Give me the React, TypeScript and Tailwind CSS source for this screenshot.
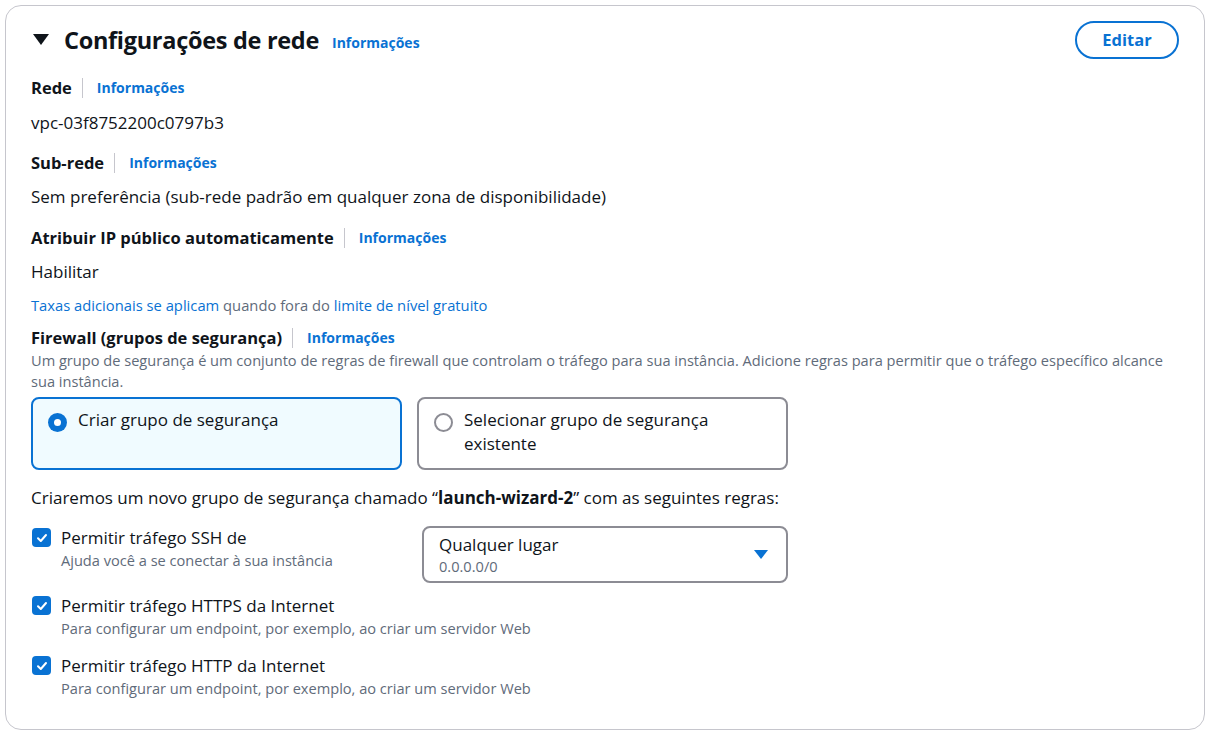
import React from "react";

const Info = () => (
  <a className="text-[14px] font-bold text-[#0972d3] leading-[20px]">Informações</a>
);

const Label = ({ children }: { children: React.ReactNode }) => (
  <div className="flex items-center h-[24px]">
    <span className="text-[16.5px] font-bold leading-[24px] text-[#0f141a]">{children}</span>
    <span className="ml-[10px] w-px h-[20px] bg-[#c6c6cd]" />
    <span className="ml-[14px] flex items-center">
      <Info />
    </span>
  </div>
);

const Check = () => (
  <span className="w-[19px] h-[19px] rounded-[4px] bg-[#0972d3] flex items-center justify-center shrink-0">
    <svg width="12" height="12" viewBox="0 0 12 12" fill="none">
      <path d="M2 6.2 L4.8 9 L10 3" stroke="white" strokeWidth="2" strokeLinecap="round" strokeLinejoin="round" />
    </svg>
  </span>
);

const CheckRow = ({ title, desc }: { title: string; desc: string }) => (
  <div className="flex">
    <div className="pt-[2px] pl-[1px]">
      <Check />
    </div>
    <div className="ml-[10px]">
      <div className="text-[17px] leading-[24px] text-[#0f141a]">{title}</div>
      <div className="text-[14.6px] leading-[21px] text-[#5f6b7a]">{desc}</div>
    </div>
  </div>
);

export default function App() {
  return (
    <div
      className="w-[1211px] h-[733px] bg-white p-[5px] pr-[6px] pb-[3px]"
      style={{ fontFamily: '"Open Sans", "Noto Sans", sans-serif' }}
    >
      <div className="h-full border border-[#c6c6cd] rounded-[16px] pl-[25px] pr-[25px] pt-[15px] text-[#0f141a]">
        {/* header */}
        <div className="flex items-center justify-between h-[38px]">
          <div className="flex items-center">
            <svg width="16" height="12" viewBox="0 0 16 12" className="ml-[2px]">
              <polygon points="0,0 16,0 8,11" fill="#0f141a" />
            </svg>
            <h2 className="ml-[15px] text-[23.5px] font-bold leading-[30px] tracking-[-0.3px]">Configurações de rede</h2>
            <span className="ml-[13px] mt-[4px]">
              <Info />
            </span>
          </div>
          <button className="w-[104px] h-[38px] rounded-full border-2 border-[#0972d3] text-[#0972d3] font-bold text-[16.5px]">
            Editar
          </button>
        </div>

        <div className="mt-[17px]">
          <Label>Rede</Label>
          <div className="mt-[11px] text-[17px] leading-[24px]">vpc-03f8752200c0797b3</div>
        </div>

        <div className="mt-[16px]">
          <Label>Sub-rede</Label>
          <div className="mt-[10px] text-[17px] leading-[24px]">
            Sem preferência (sub-rede padrão em qualquer zona de disponibilidade)
          </div>
        </div>

        <div className="mt-[17px]">
          <Label>Atribuir IP público automaticamente</Label>
          <div className="mt-[10px] text-[17px] leading-[24px]">Habilitar</div>
          <div className="mt-[11px] text-[14.75px] leading-[20px] text-[#5f6b7a]">
            <span className="text-[#0972d3]">Taxas adicionais se aplicam</span> quando fora do{" "}
            <span className="text-[#0972d3]">limite de nível gratuito</span>
          </div>
        </div>

        <div className="mt-[11px]">
          <Label>Firewall (grupos de segurança)</Label>
          <div className="text-[14.6px] leading-[21px] text-[#5f6b7a]">
            Um grupo de segurança é um conjunto de regras de firewall que controlam o tráfego para sua instância. Adicione regras para permitir que o tráfego específico alcance sua instância.
          </div>
        </div>

        <div className="mt-[5px] flex gap-[15px]">
          <div className="w-[371px] h-[73px] rounded-[8px] border-2 border-[#0972d3] bg-[#f0fbff] flex pt-[9px] pl-[15px]">
            <span className="mt-[5px] w-[19px] h-[19px] rounded-full bg-[#0972d3] flex items-center justify-center shrink-0">
              <span className="w-[7px] h-[7px] rounded-full bg-white" />
            </span>
            <span className="ml-[11px] text-[17px] leading-[24px]">Criar grupo de segurança</span>
          </div>
          <div className="w-[371px] h-[73px] rounded-[8px] border-2 border-[#8c8c94] flex pt-[9px] pl-[15px] pr-[40px]">
            <span className="mt-[5px] w-[19px] h-[19px] rounded-full border-2 border-[#8c8c94] shrink-0" />
            <span className="ml-[11px] text-[17px] leading-[24px]">Selecionar grupo de segurança existente</span>
          </div>
        </div>

        <div className="mt-[16px] text-[17px] leading-[24px]">
          Criaremos um novo grupo de segurança chamado “<b>launch-wizard-2</b>” com as seguintes regras:
        </div>

        <div className="mt-[16px] flex">
          <div className="w-[391px]">
            <CheckRow title="Permitir tráfego SSH de" desc="Ajuda você a se conectar à sua instância" />
          </div>
          <div className="w-[366px] h-[57px] rounded-[8px] border-2 border-[#8c8c94] flex items-center justify-between pl-[15px] pr-[18px]">
            <div>
              <div className="text-[17px] leading-[22px]">Qualquer lugar</div>
              <div className="text-[14.6px] leading-[20px] text-[#5f6b7a]">0.0.0.0/0</div>
            </div>
            <svg width="14" height="9" viewBox="0 0 14 9">
              <polygon points="0,0 14,0 7,9" fill="#0972d3" />
            </svg>
          </div>
        </div>

        <div className="mt-[11px]">
          <CheckRow
            title="Permitir tráfego HTTPS da Internet"
            desc="Para configurar um endpoint, por exemplo, ao criar um servidor Web"
          />
        </div>
        <div className="mt-[15px]">
          <CheckRow
            title="Permitir tráfego HTTP da Internet"
            desc="Para configurar um endpoint, por exemplo, ao criar um servidor Web"
          />
        </div>
      </div>
    </div>
  );
}
